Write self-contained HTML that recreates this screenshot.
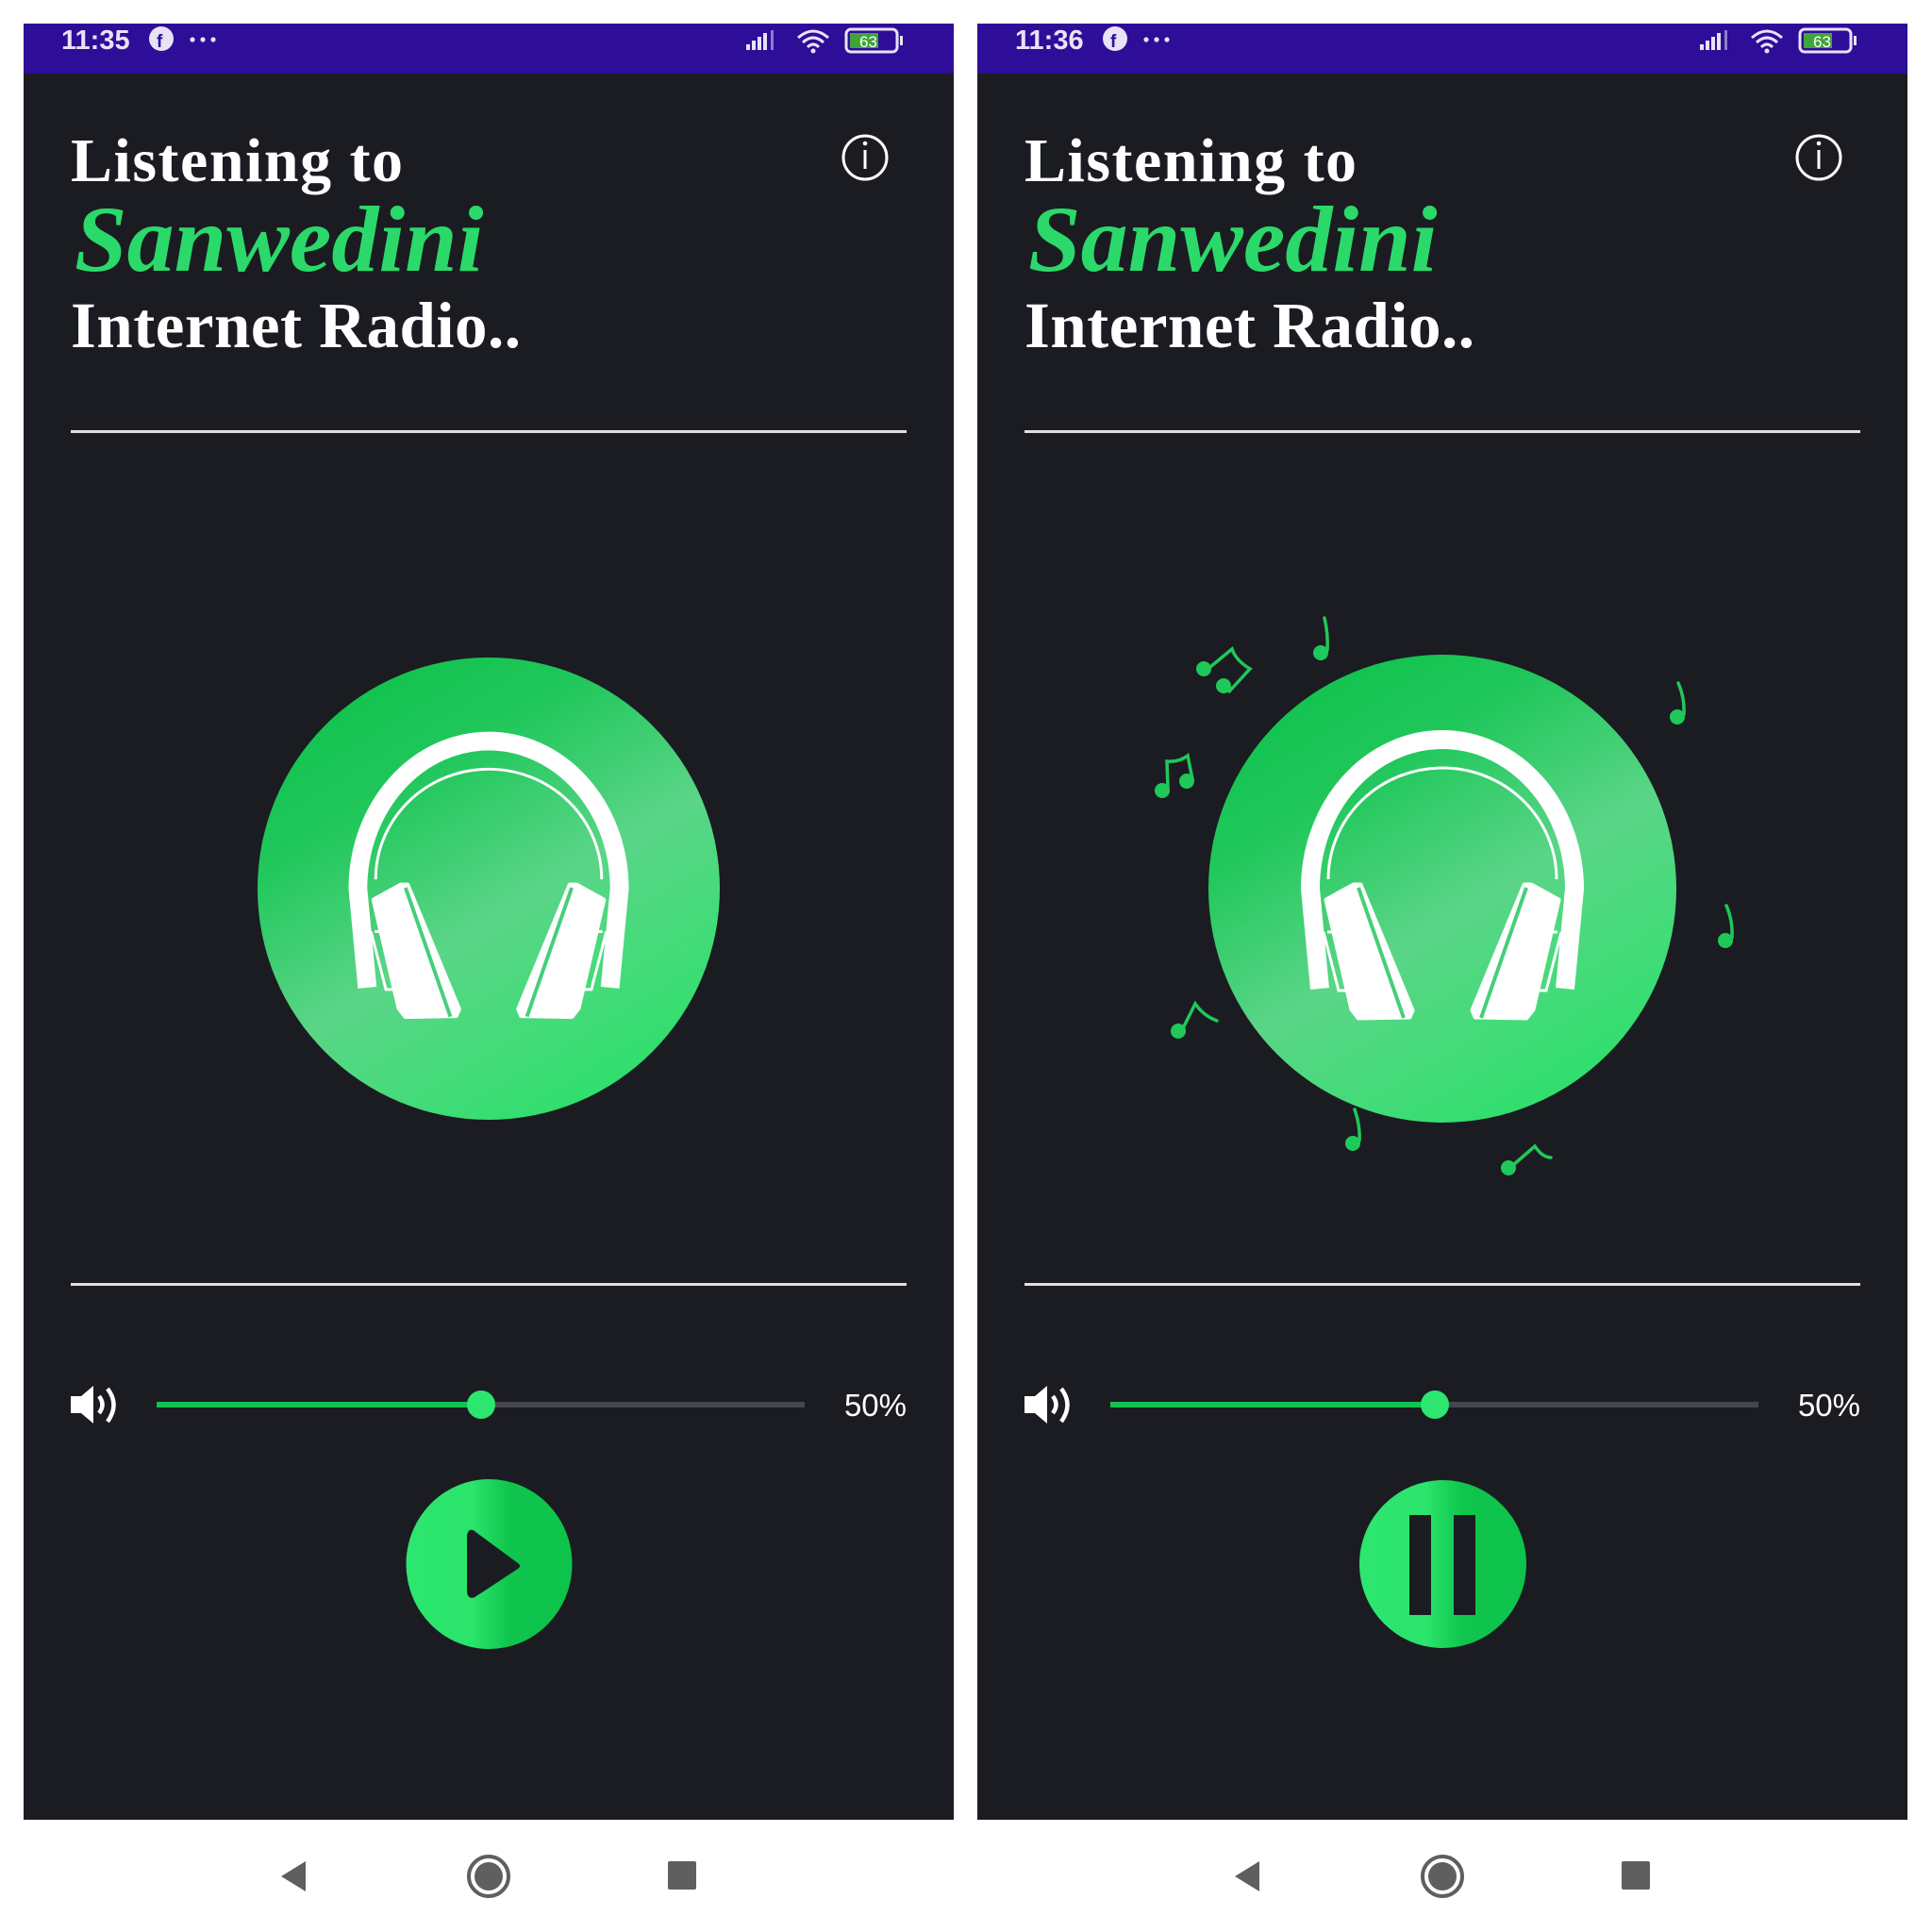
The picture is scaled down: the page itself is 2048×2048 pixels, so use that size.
<!DOCTYPE html>
<html><head><meta charset="utf-8"><style>
html,body{margin:0;padding:0;background:#fff;width:2048px;height:2048px;overflow:hidden}
svg{display:block}
.t{font-family:"Liberation Serif",serif;font-weight:bold;fill:#fff}
.s{font-family:"Liberation Sans",sans-serif}
</style></head><body>
<svg width="2048" height="2048" viewBox="0 0 2048 2048" xmlns="http://www.w3.org/2000/svg">
<defs>
<linearGradient id="cg" x1="0.2" y1="0" x2="0.8" y2="1">
<stop offset="0" stop-color="#0ec24c"/><stop offset="0.25" stop-color="#20c75b"/>
<stop offset="0.55" stop-color="#5ad587"/><stop offset="0.8" stop-color="#40dc77"/>
<stop offset="1" stop-color="#28df68"/></linearGradient>
<linearGradient id="bg" x1="0" y1="0" x2="1" y2="0">
<stop offset="0" stop-color="#2de66f"/><stop offset="0.4" stop-color="#2be46c"/>
<stop offset="0.62" stop-color="#0fc54d"/><stop offset="1" stop-color="#0dc34b"/></linearGradient>
<g id="hp">
<path d="M -130 106 L -140 0 A 140 158 0 0 1 140 0 L 130 106" fill="none" stroke="#fff" stroke-width="20"/>
<path d="M -121 -10 A 121 118 0 0 1 121 -10" fill="none" stroke="#fff" stroke-width="3"/>
<path d="M -126 46 L -110 108 L -97 108 M -122 46 L -108 46" fill="none" stroke="#fff" stroke-width="3"/>
<path d="M 126 46 L 110 108 L 97 108 M 122 46 L 108 46" fill="none" stroke="#fff" stroke-width="3"/>
<path d="M -123 12 L -94 -4 L -87 -4 L -32 129 L -35 136 L -89 137 L -96 128 Z" fill="#fff" stroke="#fff" stroke-width="5" stroke-linejoin="round"/>
<path d="M -89 -1 L -41 137" stroke="#45cf7a" stroke-width="4"/>
<path d="M 123 12 L 94 -4 L 87 -4 L 32 129 L 35 136 L 89 137 L 96 128 Z" fill="#fff" stroke="#fff" stroke-width="5" stroke-linejoin="round"/>
<path d="M 89 -1 L 41 137" stroke="#45cf7a" stroke-width="4"/>
</g>
<g id="spk" fill="#fff">
<path d="M75 1480 H86 L99 1469 V1509 L86 1498 H75 Z"/>
<path d="M105 1480 Q112 1489 105 1498" fill="none" stroke="#fff" stroke-width="4.5"/>
<path d="M114 1472 Q127 1489 114 1507" fill="none" stroke="#fff" stroke-width="4.5"/>
</g>
<g id="stat">
<rect x="25" y="25" width="986" height="53" fill="#2e0d99"/>
<circle cx="171" cy="41" r="13" fill="#e8e2f6"/>
<text x="166" y="50" font-family="Liberation Sans" font-weight="bold" font-size="19" fill="#2e0d99">f</text>
<circle cx="204" cy="42" r="2.6" fill="#e8e2f6"/><circle cx="215" cy="42" r="2.6" fill="#e8e2f6"/><circle cx="226" cy="42" r="2.6" fill="#e8e2f6"/>
<rect x="791" y="47" width="4" height="6" fill="#e8e2f6"/><rect x="797" y="43" width="4" height="10" fill="#e8e2f6"/>
<rect x="803" y="39" width="4" height="14" fill="#e8e2f6"/><rect x="809" y="35" width="4" height="18" fill="#e8e2f6"/>
<rect x="817" y="32" width="3" height="21" fill="#8d7fc8"/>
<path d="M846 40 Q862 26 878 40" fill="none" stroke="#e8e2f6" stroke-width="3"/>
<path d="M851 45 Q862 35 873 45" fill="none" stroke="#e8e2f6" stroke-width="3"/>
<path d="M856 50 Q862 44 868 50" fill="none" stroke="#e8e2f6" stroke-width="3"/>
<circle cx="862" cy="54" r="2.5" fill="#e8e2f6"/>
<rect x="897" y="31" width="54" height="24" rx="5" fill="none" stroke="#e8e2f6" stroke-width="3"/>
<rect x="901" y="35" width="30" height="16" fill="#3fa43a"/>
<rect x="954" y="38" width="3" height="10" fill="#e8e2f6"/>
<text x="911" y="50" class="s" font-size="17" fill="#fff">63</text>
</g>
</defs>

<!-- LEFT PANEL -->
<rect x="25" y="25" width="986" height="1904" fill="#1b1c21"/>
<use href="#stat"/>
<text x="65" y="52" class="s" font-size="29" font-weight="bold" fill="#e8e2f6">11:35</text>
<text x="75" y="192" class="t" font-size="66" letter-spacing="1.5" transform="translate(75,0) scale(1,1) translate(-75,0)">Listening to</text>
<text x="79" y="287" class="t" font-size="100" font-style="italic" style="fill:#2bd96b">Sanwedini</text>
<text x="75" y="368" class="t" font-size="69" letter-spacing="0.5">Internet Radio..</text>
<circle cx="917" cy="167" r="23" fill="none" stroke="#fff" stroke-width="3"/>
<rect x="915.5" y="159" width="3" height="20" fill="#fff"/><circle cx="917" cy="152" r="2.3" fill="#fff"/>
<rect x="75" y="456" width="886" height="3" fill="#e0e0e0"/>
<circle cx="518" cy="942" r="245" fill="url(#cg)"/>
<use href="#hp" transform="translate(518,942) scale(0.99)"/>
<rect x="75" y="1360" width="886" height="3" fill="#e0e0e0"/>
<use href="#spk"/>
<rect x="166" y="1486" width="687" height="6" fill="#45464c"/>
<rect x="166" y="1486" width="344" height="6" fill="#12c24f"/>
<circle cx="510" cy="1489" r="15" fill="#2de66f"/>
<text x="961" y="1501" class="s" font-size="33" fill="#fff" text-anchor="end">50%</text>
<ellipse cx="518.5" cy="1658" rx="88" ry="90" fill="url(#bg)"/>
<path d="M502 1626 Q498 1622 498 1630 L498 1686 Q498 1694 504 1689 L548 1660 L502 1626 Z" fill="#1b1c21" stroke="#1b1c21" stroke-width="6" stroke-linejoin="round"/>

<!-- RIGHT PANEL -->
<g transform="translate(1011,0)">
<rect x="25" y="25" width="986" height="1904" fill="#1b1c21"/>
<use href="#stat"/>
<text x="65" y="52" class="s" font-size="29" font-weight="bold" fill="#e8e2f6">11:36</text>
<text x="75" y="192" class="t" font-size="66" letter-spacing="1.5">Listening to</text>
<text x="79" y="287" class="t" font-size="100" font-style="italic" style="fill:#2bd96b">Sanwedini</text>
<text x="75" y="368" class="t" font-size="69" letter-spacing="0.5">Internet Radio..</text>
<circle cx="917" cy="167" r="23" fill="none" stroke="#fff" stroke-width="3"/>
<rect x="915.5" y="159" width="3" height="20" fill="#fff"/><circle cx="917" cy="152" r="2.3" fill="#fff"/>
<rect x="75" y="456" width="886" height="3" fill="#e0e0e0"/>
<circle cx="518" cy="942" r="248" fill="url(#cg)"/>
<use href="#hp" transform="translate(518,942)"/>
<rect x="75" y="1360" width="886" height="3" fill="#e0e0e0"/>
<use href="#spk"/>
<rect x="166" y="1486" width="687" height="6" fill="#45464c"/>
<rect x="166" y="1486" width="344" height="6" fill="#12c24f"/>
<circle cx="510" cy="1489" r="15" fill="#2de66f"/>
<text x="961" y="1501" class="s" font-size="33" fill="#fff" text-anchor="end">50%</text>
<ellipse cx="518.5" cy="1658" rx="88.5" ry="89" fill="url(#bg)"/>
<rect x="483" y="1606" width="23" height="106" fill="#1b1c21"/>
<rect x="530" y="1606" width="23" height="106" fill="#1b1c21"/>
</g>

<!-- music notes -->
<g fill="#1fc85a" stroke="#1fc85a" stroke-width="3.5" stroke-linecap="round">
<circle cx="1400" cy="692" r="8" stroke="none"/><path d="M1407 689 Q1408 672 1404 655" fill="none"/>
<circle cx="1276" cy="709" r="8" stroke="none"/><circle cx="1297" cy="727" r="8" stroke="none"/>
<path d="M1283 707 L1306 688 Q1310 700 1325 709 L1303 733" fill="none"/>
<circle cx="1232" cy="838" r="8" stroke="none"/><circle cx="1258" cy="828" r="8" stroke="none"/>
<path d="M1238 836 L1237 807 Q1250 808 1259 801 L1264 826" fill="none"/>
<circle cx="1778" cy="760" r="8" stroke="none"/><path d="M1785 757 Q1786 740 1779 724" fill="none"/>
<circle cx="1829" cy="997" r="8" stroke="none"/><path d="M1836 994 Q1837 976 1830 960" fill="none"/>
<circle cx="1249" cy="1093" r="8" stroke="none"/><path d="M1254 1090 L1267 1064 Q1276 1077 1290 1082" fill="none"/>
<circle cx="1434" cy="1212" r="8" stroke="none"/><path d="M1441 1209 Q1442 1194 1436 1176" fill="none"/>
<circle cx="1599" cy="1238" r="8" stroke="none"/><path d="M1604 1235 L1627 1215 Q1635 1227 1644 1227" fill="none"/>
</g>

<!-- nav bar -->
<g fill="#5f5f5f">
<path d="M324 1973 L298 1989 L324 2005 Z"/>
<circle cx="518" cy="1989" r="21" fill="none" stroke="#5f5f5f" stroke-width="4"/><circle cx="518" cy="1989" r="15"/>
<rect x="708" y="1973" width="30" height="30" rx="2"/>
<path d="M1335 1973 L1309 1989 L1335 2005 Z"/>
<circle cx="1529" cy="1989" r="21" fill="none" stroke="#5f5f5f" stroke-width="4"/><circle cx="1529" cy="1989" r="15"/>
<rect x="1719" y="1973" width="30" height="30" rx="2"/>
</g>
</svg>
</body></html>
